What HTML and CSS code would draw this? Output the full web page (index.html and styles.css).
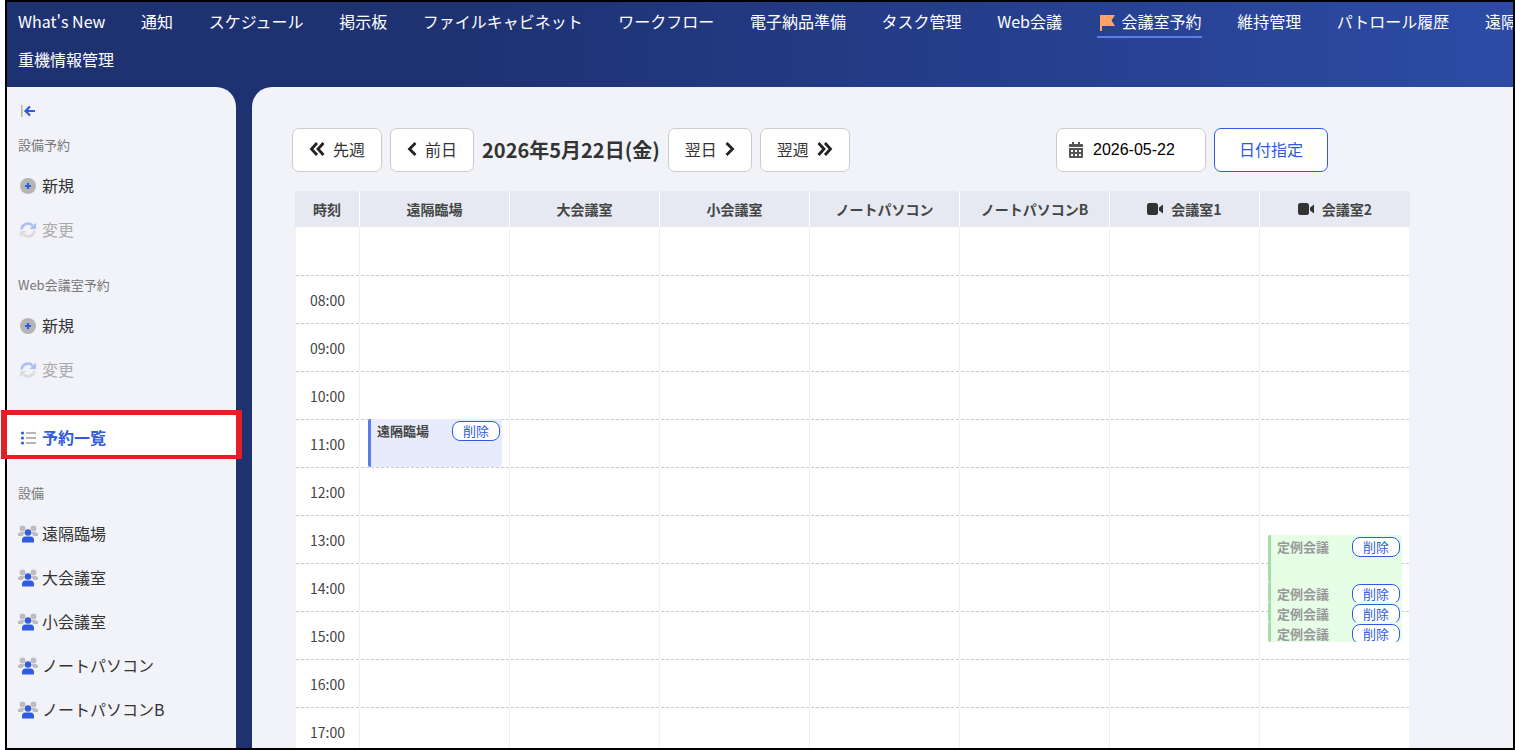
FILE: index.html
```html
<!DOCTYPE html>
<html lang="ja">
<head>
  <meta charset="utf-8">
  <title>会議室予約</title>
  <link rel="stylesheet" href="styles.css">
</head>
<body>
  <div class="frame">
    <div class="header">
      <div class="nav-row">
        <a class="nav-item">What's New</a>
        <a class="nav-item">通知</a>
        <a class="nav-item">スケジュール</a>
        <a class="nav-item">掲示板</a>
        <a class="nav-item">ファイルキャビネット</a>
        <a class="nav-item">ワークフロー</a>
        <a class="nav-item">電子納品準備</a>
        <a class="nav-item">タスク管理</a>
        <a class="nav-item">Web会議</a>
        <a class="nav-item active">
          <svg class="flag" viewBox="0 0 15 16"><path d="M0 0h15l-3.500 5.500L15 11H2v5H0z"/></svg>
          会議室予約
        </a>
        <a class="nav-item">維持管理</a>
        <a class="nav-item">パトロール履歴</a>
        <a class="nav-item">遠隔臨場</a>
      </div>
      <div class="nav-row">
        <a class="nav-item">重機情報管理</a>
      </div>
    </div>

    <div class="body">
      <div class="sidebar">
        <div class="collapse">
          <svg viewBox="0 0 16 14" width="16" height="14">
            <rect x="0" y="1" width="1.600" height="12" fill="#b5b5b5"/>
            <path d="M9 2.500L4.500 7 9 11.500M5 7h9" fill="none" stroke="#2f5be0" stroke-width="2.200"/>
          </svg>
        </div>

        <div class="side-label first">設備予約</div>
        <div class="side-item">
          <svg class="side-icon" viewBox="0 0 20 20"><circle cx="10" cy="10" r="8" fill="#b5b5b5"/><path d="M10 7v6M7 10h6" stroke="#2f5be0" stroke-width="2"/></svg>
          新規
        </div>
        <div class="side-item disabled">
          <svg class="side-icon" viewBox="0 0 20 20"><path d="M3.500 9.500A6.500 6.500 0 0 1 14.500 5.500" fill="none" stroke="#a9bdf5" stroke-width="2.500"/><path d="M18 2.500V9h-6.500z" fill="#a9bdf5"/><path d="M16.500 10.500A6.500 6.500 0 0 1 5.500 14.500" fill="none" stroke="#dcdcdc" stroke-width="2.500"/><path d="M2 17.500V11h6.500z" fill="#dcdcdc"/></svg>
          変更
        </div>

        <div class="side-label">Web会議室予約</div>
        <div class="side-item">
          <svg class="side-icon" viewBox="0 0 20 20"><circle cx="10" cy="10" r="8" fill="#b5b5b5"/><path d="M10 7v6M7 10h6" stroke="#2f5be0" stroke-width="2"/></svg>
          新規
        </div>
        <div class="side-item disabled">
          <svg class="side-icon" viewBox="0 0 20 20"><path d="M3.500 9.500A6.500 6.500 0 0 1 14.500 5.500" fill="none" stroke="#a9bdf5" stroke-width="2.500"/><path d="M18 2.500V9h-6.500z" fill="#a9bdf5"/><path d="M16.500 10.500A6.500 6.500 0 0 1 5.500 14.500" fill="none" stroke="#dcdcdc" stroke-width="2.500"/><path d="M2 17.500V11h6.500z" fill="#dcdcdc"/></svg>
          変更
        </div>

        <div class="side-item current">
          <svg class="side-icon" viewBox="0 0 20 20"><circle cx="4.500" cy="5" r="1.600" fill="#2f5be0"/><circle cx="4.500" cy="10" r="1.600" fill="#2f5be0"/><circle cx="4.500" cy="15" r="1.600" fill="#2f5be0"/><path d="M8 5h10M8 10h10M8 15h10" stroke="#b5b5b5" stroke-width="2"/></svg>
          予約一覧
        </div>

        <div class="side-label">設備</div>
        <div class="side-item">
          <svg class="side-icon" viewBox="0 0 20 20"><circle cx="4.500" cy="4.500" r="3" fill="#bdbdc2"/><circle cx="15.500" cy="4.500" r="3" fill="#bdbdc2"/><path d="M0 12v-1.500Q0 8 3 8h3q1 0 1.500 1Q5 10.500 4.500 12zM20 12v-1.500Q20 8 17 8h-3q-1 0-1.500 1 2.500 1.500 3 3z" fill="#bdbdc2"/><circle cx="10" cy="8.500" r="3.200" fill="#2f5be0"/><path d="M4 18.500v-2q0-4 3.500-4h5q3.500 0 3.500 4v2z" fill="#2f5be0"/></svg>
          遠隔臨場
        </div>
        <div class="side-item">
          <svg class="side-icon" viewBox="0 0 20 20"><circle cx="4.500" cy="4.500" r="3" fill="#bdbdc2"/><circle cx="15.500" cy="4.500" r="3" fill="#bdbdc2"/><path d="M0 12v-1.500Q0 8 3 8h3q1 0 1.500 1Q5 10.500 4.500 12zM20 12v-1.500Q20 8 17 8h-3q-1 0-1.500 1 2.500 1.500 3 3z" fill="#bdbdc2"/><circle cx="10" cy="8.500" r="3.200" fill="#2f5be0"/><path d="M4 18.500v-2q0-4 3.500-4h5q3.500 0 3.500 4v2z" fill="#2f5be0"/></svg>
          大会議室
        </div>
        <div class="side-item">
          <svg class="side-icon" viewBox="0 0 20 20"><circle cx="4.500" cy="4.500" r="3" fill="#bdbdc2"/><circle cx="15.500" cy="4.500" r="3" fill="#bdbdc2"/><path d="M0 12v-1.500Q0 8 3 8h3q1 0 1.500 1Q5 10.500 4.500 12zM20 12v-1.500Q20 8 17 8h-3q-1 0-1.500 1 2.500 1.500 3 3z" fill="#bdbdc2"/><circle cx="10" cy="8.500" r="3.200" fill="#2f5be0"/><path d="M4 18.500v-2q0-4 3.500-4h5q3.500 0 3.500 4v2z" fill="#2f5be0"/></svg>
          小会議室
        </div>
        <div class="side-item">
          <svg class="side-icon" viewBox="0 0 20 20"><circle cx="4.500" cy="4.500" r="3" fill="#bdbdc2"/><circle cx="15.500" cy="4.500" r="3" fill="#bdbdc2"/><path d="M0 12v-1.500Q0 8 3 8h3q1 0 1.500 1Q5 10.500 4.500 12zM20 12v-1.500Q20 8 17 8h-3q-1 0-1.500 1 2.500 1.500 3 3z" fill="#bdbdc2"/><circle cx="10" cy="8.500" r="3.200" fill="#2f5be0"/><path d="M4 18.500v-2q0-4 3.500-4h5q3.500 0 3.500 4v2z" fill="#2f5be0"/></svg>
          ノートパソコン
        </div>
        <div class="side-item">
          <svg class="side-icon" viewBox="0 0 20 20"><circle cx="4.500" cy="4.500" r="3" fill="#bdbdc2"/><circle cx="15.500" cy="4.500" r="3" fill="#bdbdc2"/><path d="M0 12v-1.500Q0 8 3 8h3q1 0 1.500 1Q5 10.500 4.500 12zM20 12v-1.500Q20 8 17 8h-3q-1 0-1.500 1 2.500 1.500 3 3z" fill="#bdbdc2"/><circle cx="10" cy="8.500" r="3.200" fill="#2f5be0"/><path d="M4 18.500v-2q0-4 3.500-4h5q3.500 0 3.500 4v2z" fill="#2f5be0"/></svg>
          ノートパソコンB
        </div>
      </div>

      <div class="main">
        <div class="toolbar">
          <div class="toolbar-group">
            <button class="btn">
              <svg class="icon-double" viewBox="0 0 16 16"><path d="M8 2L2.500 8 8 14M14.500 2L9 8l5.500 6"/></svg>
              先週
            </button>
            <button class="btn">
              <svg class="icon-single" viewBox="0 0 10 16"><path d="M8.500 2L2.500 8l6 6"/></svg>
              前日
            </button>
            <h2 class="date-title">2026年5月22日(金)</h2>
            <button class="btn">
              翌日
              <svg class="icon-single" viewBox="0 0 10 16"><path d="M1.500 2l6 6-6 6"/></svg>
            </button>
            <button class="btn">
              翌週
              <svg class="icon-double" viewBox="0 0 16 16"><path d="M1.500 2L7 8l-5.500 6M8 2l5.500 6L8 14"/></svg>
            </button>
          </div>
          <div class="toolbar-group">
            <div class="date-input">
              <svg viewBox="0 0 14 16" width="14" height="16"><path fill="#555" fill-rule="evenodd" d="M3 0h2v2h4V0h2v2h2a1 1 0 0 1 1 1v2H0V3a1 1 0 0 1 1-1h2zM0 6h14v9a1 1 0 0 1-1 1H1a1 1 0 0 1-1-1zm2 2v2h2V8zm4 0v2h2V8zm4 0v2h2V8zm-8 4v2h2v-2zm4 0v2h2v-2zm4 0v2h2v-2z"/></svg>
              <span>2026-05-22</span>
            </div>
            <button class="btn btn-primary">日付指定</button>
          </div>
        </div>

        <div class="schedule">
          <div class="head-row">
            <div class="head-cell">時刻</div>
            <div class="head-cell">遠隔臨場</div>
            <div class="head-cell">大会議室</div>
            <div class="head-cell">小会議室</div>
            <div class="head-cell">ノートパソコン</div>
            <div class="head-cell">ノートパソコンB</div>
            <div class="head-cell">
              <svg class="video" viewBox="0 0 16 12"><rect width="11" height="12" rx="2.500"/><path d="M12 4.500L16 1.500v9l-4-3z"/></svg>
              会議室1
            </div>
            <div class="head-cell">
              <svg class="video" viewBox="0 0 16 12"><rect width="11" height="12" rx="2.500"/><path d="M12 4.500L16 1.500v9l-4-3z"/></svg>
              会議室2
            </div>
          </div>

          <div class="row first-row">
            <div class="time"></div><div class="cell"></div><div class="cell"></div><div class="cell"></div><div class="cell"></div><div class="cell"></div><div class="cell"></div><div class="cell"></div>
          </div>
          <div class="row">
            <div class="time">08:00</div><div class="cell"></div><div class="cell"></div><div class="cell"></div><div class="cell"></div><div class="cell"></div><div class="cell"></div><div class="cell"></div>
          </div>
          <div class="row">
            <div class="time">09:00</div><div class="cell"></div><div class="cell"></div><div class="cell"></div><div class="cell"></div><div class="cell"></div><div class="cell"></div><div class="cell"></div>
          </div>
          <div class="row">
            <div class="time">10:00</div><div class="cell"></div><div class="cell"></div><div class="cell"></div><div class="cell"></div><div class="cell"></div><div class="cell"></div><div class="cell"></div>
          </div>
          <div class="row">
            <div class="time">11:00</div>
            <div class="cell">
              <div class="event event-blue">
                <span class="event-name">遠隔臨場</span>
                <button class="event-delete">削除</button>
              </div>
            </div>
            <div class="cell"></div><div class="cell"></div><div class="cell"></div><div class="cell"></div><div class="cell"></div><div class="cell"></div>
          </div>
          <div class="row">
            <div class="time">12:00</div><div class="cell"></div><div class="cell"></div><div class="cell"></div><div class="cell"></div><div class="cell"></div><div class="cell"></div><div class="cell"></div>
          </div>
          <div class="row">
            <div class="time">13:00</div><div class="cell"></div><div class="cell"></div><div class="cell"></div><div class="cell"></div><div class="cell"></div><div class="cell"></div>
            <div class="cell">
              <div class="event event-green slot-a">
                <span class="event-name">定例会議</span>
                <button class="event-delete">削除</button>
              </div>
              <div class="event event-green slot-b">
                <span class="event-name">定例会議</span>
                <button class="event-delete">削除</button>
              </div>
              <div class="event event-green slot-c">
                <span class="event-name">定例会議</span>
                <button class="event-delete">削除</button>
              </div>
              <div class="event event-green slot-d">
                <span class="event-name">定例会議</span>
                <button class="event-delete">削除</button>
              </div>
            </div>
          </div>
          <div class="row">
            <div class="time">14:00</div><div class="cell"></div><div class="cell"></div><div class="cell"></div><div class="cell"></div><div class="cell"></div><div class="cell"></div><div class="cell"></div>
          </div>
          <div class="row">
            <div class="time">15:00</div><div class="cell"></div><div class="cell"></div><div class="cell"></div><div class="cell"></div><div class="cell"></div><div class="cell"></div><div class="cell"></div>
          </div>
          <div class="row">
            <div class="time">16:00</div><div class="cell"></div><div class="cell"></div><div class="cell"></div><div class="cell"></div><div class="cell"></div><div class="cell"></div><div class="cell"></div>
          </div>
          <div class="row">
            <div class="time">17:00</div><div class="cell"></div><div class="cell"></div><div class="cell"></div><div class="cell"></div><div class="cell"></div><div class="cell"></div><div class="cell"></div>
          </div>
        </div>
      </div>
    </div>
  </div>

  <div class="callout"></div>
</body>
</html>
```

FILE: styles.css
```css
:root {
  --navy: #1e3272;
  --navy-light: #2d4ba6;
  --blue: #2f5be0;
  --panel: #f2f3f8;
  --head: #e6e9f2;
  --text: #333333;
}

* {
  margin: 0;
  padding: 0;
  box-sizing: border-box;
}

html,
body {
  width: 1515px;
  height: 750px;
  overflow: hidden;
  background: #ffffff;
}

body {
  position: relative;
  font-family: "Noto Sans CJK JP", "Noto Sans", sans-serif;
  color: var(--text);
}

button {
  font-family: inherit;
}

.frame {
  display: flex;
  flex-direction: column;
  width: 1510px;
  height: 750px;
  margin-left: 5px;
  border: 2px solid #000000;
  overflow: hidden;
  background: linear-gradient(90deg, var(--navy) 30%, var(--navy-light) 100%);
}

/* top navigation */
.header {
  flex-shrink: 0;
  height: 85px;
  padding-left: 11px;
  overflow: hidden;
}

.nav-row {
  display: flex;
  gap: 35.6px;
  height: 38px;
  align-items: center;
  white-space: nowrap;
}

.nav-item {
  display: flex;
  align-items: center;
  height: 26px;
  flex-shrink: 0;
  font-size: 16px;
  color: #ffffff;
}

.nav-item.active {
  gap: 7px;
  padding-left: 3px;
  margin-left: -1px;
  margin-top: 4px;
  height: 30px;
  padding-bottom: 2px;
  border-bottom: 2px solid #5b7fe8;
}

.flag {
  width: 15px;
  height: 16px;
  margin-top: 4px;
  fill: #ffa366;
}

.body {
  flex: 1;
  display: flex;
  gap: 16px;
  min-height: 0;
}

/* left menu */
.sidebar {
  flex-shrink: 0;
  width: 229px;
  background: var(--panel);
  border-top-right-radius: 20px;
}

.collapse {
  display: flex;
  align-items: center;
  height: 20px;
  margin-top: 14px;
  padding-left: 14px;
}

.side-label {
  height: 20px;
  margin-top: 23px;
  margin-bottom: 9px;
  padding-left: 11px;
  font-size: 13px;
  line-height: 20px;
  color: #777777;
}

.side-label.first {
  margin-top: 14px;
}

.side-item {
  display: flex;
  align-items: center;
  gap: 4px;
  height: 44px;
  padding-left: 11px;
  padding-bottom: 2px;
  font-size: 16px;
  color: var(--text);
}

.side-item.disabled {
  color: #aaaaaa;
}

.side-item.current {
  margin-top: 23px;
  padding-top: 2px;
  background: #ffffff;
  font-weight: 700;
  color: var(--blue);
}

.side-item.current + .side-label {
  margin-top: 24px;
}

.side-icon {
  width: 20px;
  height: 20px;
  margin-top: 2px;
  flex-shrink: 0;
}

/* calendar area */
.main {
  flex: 1;
  min-width: 0;
  padding: 41px 0 0 40px;
  background: var(--panel);
  border-top-left-radius: 20px;
  overflow: hidden;
}

.toolbar {
  display: flex;
  justify-content: space-between;
  width: 1036px;
  height: 44px;
}

.toolbar-group {
  display: flex;
  align-items: center;
  gap: 8px;
}

.btn {
  display: flex;
  align-items: center;
  gap: 8px;
  height: 44px;
  padding: 0 16px 2px;
  background: #ffffff;
  border: 1px solid #cccccc;
  border-radius: 7px;
  font-size: 16px;
  color: var(--text);
}

.btn-primary {
  justify-content: center;
  width: 114px;
  color: var(--blue);
  border-color: var(--blue);
}

.icon-double,
.icon-single {
  height: 16px;
  fill: none;
  stroke: #222222;
  stroke-width: 2.8;
}

.icon-double {
  width: 16px;
}

.icon-single {
  width: 10px;
}

.date-title {
  padding-bottom: 2px;
  font-size: 20px;
  font-weight: 700;
  color: var(--text);
  white-space: nowrap;
}

.date-input {
  display: flex;
  align-items: center;
  gap: 10px;
  width: 150px;
  height: 44px;
  padding-left: 12px;
  background: #ffffff;
  border: 1px solid #cccccc;
  border-radius: 7px;
  font-family: "Liberation Sans", Arial, sans-serif;
  font-size: 16px;
  color: #000000;
}

.schedule {
  width: 1115px;
  margin: 19px 0 0 3px;
}

.head-row {
  display: grid;
  grid-template-columns: 65px repeat(7, 150px);
  height: 36px;
  background: var(--head);
}

.head-cell {
  display: flex;
  align-items: center;
  justify-content: center;
  gap: 8px;
  border-right: 1px solid #ffffff;
  font-size: 14px;
  font-weight: 700;
  color: #444444;
}

.head-cell:last-child {
  border-right: 0;
}

.video {
  width: 16px;
  height: 12px;
  fill: #333333;
}

.row {
  display: grid;
  grid-template-columns: 64px repeat(6, 150px) 149px;
  height: 48px;
  margin: 0 1px;
  background: #ffffff;
  border-bottom: 1px dashed #cccccc;
}

.first-row {
  height: 49px;
}

.time {
  display: flex;
  align-items: center;
  justify-content: center;
  padding-top: 1px;
  border-right: 1px solid #eeeeee;
  font-size: 14px;
  color: #444444;
}

.cell {
  position: relative;
  border-right: 1px solid #eeeeee;
}

.cell:last-child {
  border-right: 0;
}

/* bookings, placed over the grid */
.event {
  position: absolute;
  left: 8px;
  width: 134px;
  display: flex;
  justify-content: space-between;
  padding: 2px 2px 0 6px;
  overflow: hidden;
  border-left: 3px solid;
  border-radius: 2px 3px 3px 2px;
}

.event-blue {
  top: -1px;
  height: 48px;
  background: #e8ebfc;
  border-left-color: #5b7cf0;
}

.event-green {
  background: #e6fde6;
  border-left-color: #a8dca8;
}

.event-green .event-name {
  color: #999999;
}

.slot-a {
  top: 19px;
  height: 47px;
}

.slot-b {
  top: 66px;
  height: 20px;
}

.slot-c {
  top: 86px;
  height: 20px;
}

.slot-d {
  top: 106px;
  height: 20px;
}

.event-name {
  font-size: 13px;
  font-weight: 700;
  line-height: 20px;
  color: #444444;
}

.event-delete {
  flex-shrink: 0;
  width: 48px;
  height: 20px;
  background: #ffffff;
  border: 1px solid var(--blue);
  border-radius: 8px;
  font-size: 13px;
  line-height: 16px;
  color: var(--blue);
}

/* red annotation box over the menu */
.callout {
  position: absolute;
  left: 1px;
  top: 410px;
  width: 241px;
  height: 49px;
  border: solid #e31e24;
  border-width: 5px 6px 4px 6px;
}
```
